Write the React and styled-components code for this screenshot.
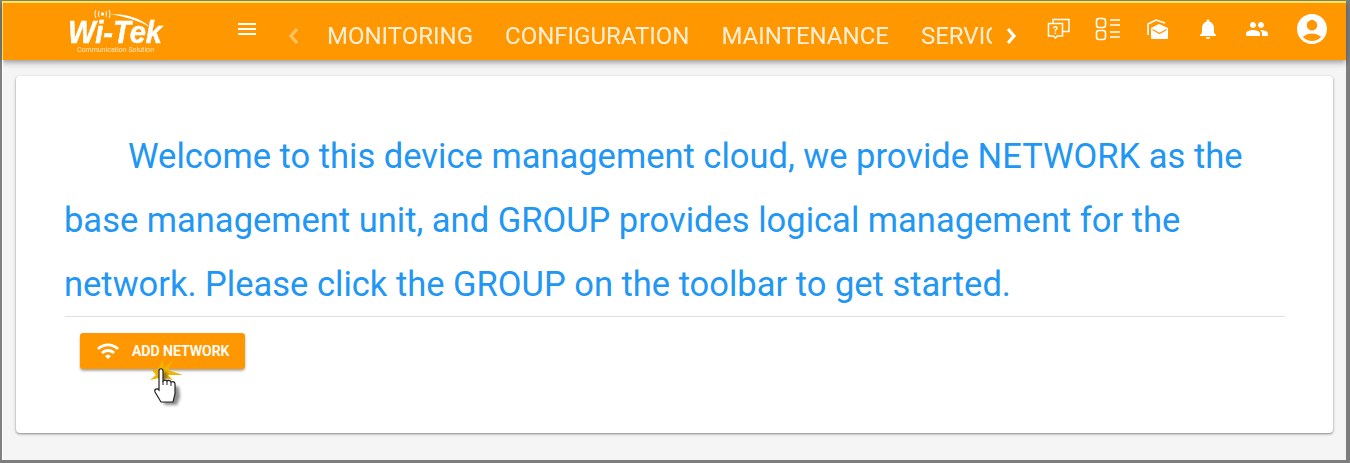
import React from 'react';
import styled, { createGlobalStyle } from 'styled-components';
import { MdMenu, MdNotifications, MdPeople, MdAccountCircle, MdWifi } from 'react-icons/md';

const GlobalStyle = createGlobalStyle`
  html, body {
    margin: 0;
    padding: 0;
    height: 463px;
    overflow: hidden;
    background: #f5f5f5;
    font-family: Roboto, "Noto Sans", sans-serif;
  }
`;

const Frame = styled.div`
  box-sizing: border-box;
  width: 1350px;
  height: 463px;
  display: flex;
  flex-direction: column;
  background: #f5f5f5;
  border-style: solid;
  border-width: 1px 4px 3px 2px;
  border-color: #8a8a70 #7d7d7d #7d7d7d #808080;
`;

const Toolbar = styled.header`
  display: flex;
  align-items: center;
  box-sizing: border-box;
  height: 59px;
  flex-shrink: 0;
  background: #ff9800;
  color: #fff;
  border-top: 2px solid #ffe45c;
  border-left: 1px solid #ffe45c;
  box-shadow: 0 2px 4px -1px rgba(0, 0, 0, .2), 0 4px 5px rgba(0, 0, 0, .14), 0 1px 10px rgba(0, 0, 0, .12);
`;

const Logo = styled.svg`
  width: 100px;
  height: 46px;
  margin-left: 61px;
  flex-shrink: 0;
  filter: blur(.4px);
`;

const MenuButton = styled(MdMenu)`
  width: 24px;
  height: 24px;
  margin-left: 71px;
  margin-bottom: 5px;
  flex-shrink: 0;
`;

const Arrow = styled.svg`
  width: ${p => p.$width}px;
  height: 18px;
  flex-shrink: 0;
  margin: 9px 0 0 ${p => p.$left}px;
  opacity: ${p => (p.$disabled ? 0.4 : 1)};
`;

const TabStrip = styled.nav`
  width: 665px;
  margin: 9px 0 0 28px;
  display: flex;
  gap: 32px;
  overflow: hidden;
  flex-shrink: 0;
`;

const Tab = styled.span`
  font-size: 24px;
  line-height: 32px;
  white-space: nowrap;
  opacity: 0.85;
`;

const IconGroup = styled.div`
  display: flex;
  align-items: center;
  margin-left: 16px;
  padding-bottom: 5px;
`;

const IconSlot = styled.span`
  display: flex;
  justify-content: center;
  width: ${p => p.$width || 50}px;
`;

const Content = styled.main`
  flex: 1;
  padding: 16px 13px 27px 13px;
  display: flex;
  border-left: 1px solid #fff;
`;

const Card = styled.section`
  flex: 1;
  background: #fff;
  border-radius: 4px;
  padding: 48px 48px 0 49px;
  box-shadow: 0 1px 3px rgba(0, 0, 0, .3), 0 1px 2px rgba(0, 0, 0, .2);
`;

const Welcome = styled.p`
  margin: 0 0 0 -1px;
  color: #2196f3;
  font-size: 34.5px;
  line-height: 64px;
  text-indent: 64px;
`;

const Divider = styled.hr`
  margin: 0;
  border: 0;
  height: 1px;
  background: #e0e0e0;
`;

const AddWrap = styled.div`
  position: relative;
  margin: 16px 0 0 15px;
  width: 165px;
`;

const AddButton = styled.button`
  display: flex;
  align-items: center;
  width: 165px;
  height: 36px;
  padding: 0 0 0 16px;
  border: 0;
  border-radius: 3px;
  background: #ff9800;
  color: #fff;
  font: 500 14px Roboto, sans-serif;
  -webkit-text-stroke: .2px #fff;
  box-shadow: 0 2px 3px -1px rgba(0, 0, 0, .3), 0 2px 3px rgba(0, 0, 0, .18);
  svg { margin-right: 12px; }
`;

const Cursor = styled.svg`
  position: absolute;
  left: 65px;
  top: 27px;
  width: 45px;
  height: 48px;
`;

const HelpIcon = () => (
  <svg width="24" height="24" viewBox="0 0 24 24" fill="none" stroke="#fff" strokeWidth="1.5">
    <path d="M7 6V2.500h16v12h-7" />
    <path d="M2.500 6.500h14v12.500h-5l-2 2-2-2h-5z" fill="#ff9800" />
    <text x="9.500" y="16.500" fontSize="10" fontWeight="700" fill="#fff" stroke="none" fontFamily="Roboto" textAnchor="middle">?</text>
  </svg>
);

const ListIcon = () => (
  <svg width="26" height="24" viewBox="0 0 26 24" fill="none" stroke="#fff" strokeWidth="1.6">
    <rect x="1.500" y="1.500" width="9" height="9" rx="2.500" />
    <rect x="1.500" y="13.500" width="9" height="9" rx="2.500" />
    <path d="M15 3h10M15 8h10M15 15h10M15 20h10" />
  </svg>
);

const MailIcon = () => (
  <svg width="24" height="24" viewBox="0 0 24 24">
    <path d="M2 18V7l8-4 9 3" fill="none" stroke="#fff" strokeWidth="1.6" />
    <path d="M5 11l8-4 9 4v10a1 1 0 0 1-1 1H6a1 1 0 0 1-1-1z" fill="#fff" />
    <path d="M6.500 12.500l7 4 7-4" fill="none" stroke="#ff9800" strokeWidth="1.400" />
  </svg>
);

const Tabs = ['MONITORING', 'CONFIGURATION', 'MAINTENANCE', 'SERVICE'];

export default function App() {
  return (
    <>
      <GlobalStyle />
      <Frame>
        <Toolbar>
          <Logo viewBox="0 0 100 46">
            <g fill="none" stroke="#fff" strokeWidth="1.100" opacity=".85">
              <path d="M32 1q-2 4 0 8M35 2q-1 3 0 6M42 2q1 3 0 6M45 1q2 4 0 8" />
            </g>
            <circle cx="38.500" cy="5" r="1.700" fill="#fff" />
            <path d="M46 5q26 0 40 13q-16-9-40-13z" fill="#fff" />
            <text x="4" y="33.500" fill="#fff" stroke="#fff" strokeWidth=".5" fontFamily="Liberation Sans" fontStyle="italic" fontWeight="700" fontSize="31" textLength="94" lengthAdjust="spacingAndGlyphs">Wi-Tek</text>
            <text x="13" y="42.500" fill="#fff" opacity=".75" fontFamily="Roboto" fontSize="7" textLength="77">Communication Solution</text>
          </Logo>
          <MenuButton />
          <Arrow $disabled $width={11} $left={29} viewBox="0 0 11 18">
            <path d="M9 2L3 9l6 7" fill="none" stroke="#fff" strokeWidth="3.200" />
          </Arrow>
          <TabStrip>
            {Tabs.map(t => <Tab key={t}>{t}</Tab>)}
          </TabStrip>
          <Arrow $width={12} $left={13} viewBox="0 0 12 18">
            <path d="M3 2l6 7-6 7" fill="none" stroke="#fff" strokeWidth="3.200" />
          </Arrow>
          <IconGroup>
            <IconSlot><HelpIcon /></IconSlot>
            <IconSlot><ListIcon /></IconSlot>
            <IconSlot><MailIcon /></IconSlot>
            <IconSlot><MdNotifications size={24} /></IconSlot>
            <IconSlot $width={48}><MdPeople size={24} /></IconSlot>
            <IconSlot $width={62}><MdAccountCircle size={36} /></IconSlot>
          </IconGroup>
        </Toolbar>
        <Content>
          <Card>
            <Welcome>Welcome to this device management cloud, we provide NETWORK as the base management unit, and GROUP provides logical management for the network. Please click the GROUP on the toolbar to get started.</Welcome>
            <Divider />
            <AddWrap>
              <AddButton><MdWifi size={24} />ADD NETWORK</AddButton>
              <Cursor viewBox="0 0 45 48">
                <defs>
                  <filter id="handShadow" x="-30%" y="-30%" width="170%" height="170%">
                    <feGaussianBlur stdDeviation="1.500" />
                  </filter>
                </defs>
                <path d="M17 0l2 8 9-8-5 10 15 5-15 0 5 5-8-2-2 6-4-6-9 2 6-5-4-5 6 0z" fill="#f0b400" />
                <path d="M14 11c0-3 4-3 4 0v10l12 3 1 10-3 8H16l-6-10c-1-3 2-4 4-2z" fill="#333" opacity=".55" filter="url(#handShadow)" transform="translate(4 3)" />
                <path d="M14 11c0-3 4-3 4 0v10c1-1 3-1 4 0 1-1 3-1 4 1 2-1 4 0 4 2v10l-2 8H16l-6-10c-1-3 2-4 4-2z" fill="#fff" stroke="#222" strokeWidth="1.200" />
                <path d="M18 21v4M22 21v4M26 22v4" stroke="#222" strokeWidth="1" fill="none" />
              </Cursor>
            </AddWrap>
          </Card>
        </Content>
      </Frame>
    </>
  );
}
